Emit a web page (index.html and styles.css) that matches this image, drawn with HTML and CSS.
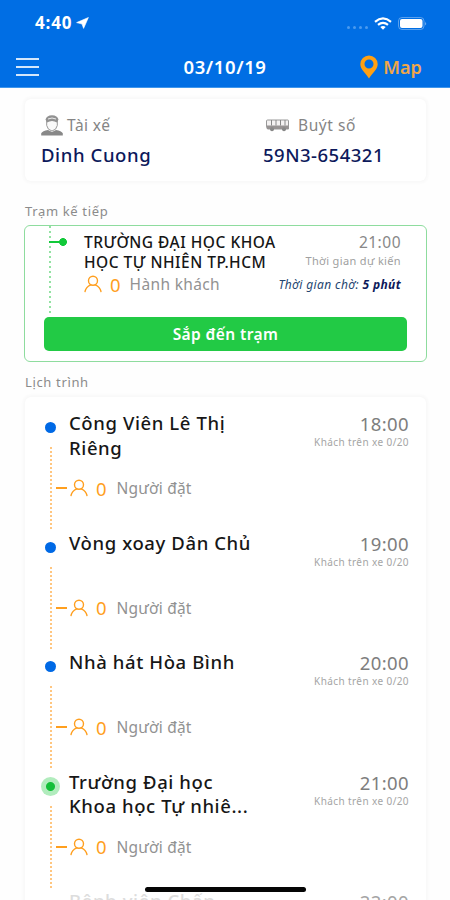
FILE: index.html
```html
<!DOCTYPE html>
<html lang="vi">
<head>
<meta charset="utf-8">
<title>Lịch trình</title>
<link rel="stylesheet" href="styles.css">
</head>
<body>
<svg class="defs" width="0" height="0">
  <symbol id="person" viewBox="0 0 18 18"><g fill="none" stroke="#ff9f1f" stroke-width="1.4" stroke-linecap="round"><circle cx="9" cy="5.7" r="4.5"/><path d="M1 16.5C1.6 13.3 3.7 11.1 6.8 9.8M17 16.5C16.4 13.3 14.3 11.1 11.2 9.8"/></g></symbol>
</svg>
<div class="screen">
  <header class="header">
    <div class="status">
      <span class="clock">4:40</span>
      <svg class="nav-arrow" width="13" height="12" viewBox="0 0 13 12"><path fill="#fff" stroke="#fff" stroke-width=".6" stroke-linejoin="round" d="M12.400.5 7.600 11.400 6 7 .6 5.600z"/></svg>
      <span class="signal"><i></i><i></i><i></i><i></i></span>
      <svg class="wifi" width="18" height="13" viewBox="0 0 18 13"><g fill="none" stroke="#fff" stroke-width="2.2"><path d="M1 4.8Q9-2 17 4.8"/><path d="M4 7.9Q9 3.8 14 7.9"/></g><path fill="#fff" d="M6.3 10Q9 7.8 11.7 10L9 12.8z"/></svg>
      <svg class="battery" width="29" height="13" viewBox="0 0 29 13"><rect x=".5" y=".5" width="25.500" height="12" rx="3.500" fill="none" stroke="#fff" stroke-opacity=".35"/><rect x="2" y="2" width="22.500" height="9" rx="2" fill="#fff"/><path d="M27.300 4.500q1.500 2 0 4z" fill="#fff" opacity=".6"/></svg>
    </div>
    <div class="bar">
      <span class="menu"><i></i><i></i><i></i></span>
      <h1 class="date">03/10/19</h1>
      <div class="map">
        <svg width="18" height="24" viewBox="0 0 18 24"><path fill="#ffa012" fill-rule="evenodd" d="M9 .5A8.700 8.700 0 0 0 .3 9.200C.3 14.500 6.800 19.300 9 23.500 11.200 19.300 17.700 14.500 17.700 9.200A8.700 8.700 0 0 0 9 .5zM9 4.500a4.500 4.500 0 1 1 0 9 4.500 4.500 0 0 1 0-9z"/></svg>
        <span>Map</span>
      </div>
    </div>
  </header>

  <section class="card info">
    <div class="driver">
      <div class="info-label">
        <svg width="22" height="21" viewBox="0 0 22 21"><path fill="#888" d="M.2 20.500v-2.200q1.300-2.200 6.800-3.200l4 2 4-2q5.500 1 6.800 3.200v2.200z"/><path fill="#fafafa" stroke="#999" d="M5.700 5v5.500Q6.500 15 11 16q4.500-1 5.300-5.500V5z"/><path fill="#929292" d="M4.500 4.500Q5.500.5 11 .3q5.500.2 6.500 4.200l-1.500 3Q11 4.500 6 7.500z"/><path fill="none" stroke="#eee" d="M7 4q4-2 8 0"/></svg>
        <span>Tài xế</span>
      </div>
      <div class="info-value name">Dinh Cuong</div>
    </div>
    <div class="bus">
      <div class="info-label">
        <svg width="24" height="13" viewBox="0 0 24 13"><path d="M1.500 1h20.300q.7 0 .7.700V10H1.500Q.5 9 .5 7V2q0-1 1-1z" fill="#f4f2f2" stroke="#999"/><path d="M1 6.500h21.500V10H1z" fill="#979393"/><path d="M5.500 1v5.500M10 1v5.500M14.500 1v5.500M19 1v5.500" stroke="#888"/><circle cx="6" cy="10.300" r="2" fill="#888"/><circle cx="18" cy="10.300" r="2" fill="#888"/></svg>
        <span>Buýt số</span>
      </div>
      <div class="info-value plate">59N3-654321</div>
    </div>
  </section>

  <h2 class="caption next-caption">Trạm kế tiếp</h2>
  <section class="next">
    <div class="next-body">
      <div class="next-rail"><i></i></div>
      <div class="next-main">
        <div class="next-title">TRƯỜNG ĐẠI HỌC KHOA<br>HỌC TỰ NHIÊN TP.HCM</div>
        <div class="people"><svg width="18" height="18"><use href="#person"/></svg><b>0</b><span class="passengers">Hành khách</span></div>
      </div>
      <div class="next-side">
        <div class="next-time">21:00</div>
        <div class="expected">Thời gian dự kiến</div>
        <div class="wait">Thời gian chờ: <b>5 phút</b></div>
      </div>
    </div>
    <button class="arrive">Sắp đến trạm</button>
  </section>

  <h2 class="caption list-caption">Lịch trình</h2>
  <section class="card list">
    <article class="stop">
      <div class="rail"><i class="dot"></i><i class="line"></i></div>
      <div class="stop-main"><h3>Công Viên Lê Thị<br>Riêng</h3><div class="people booked"><svg width="18" height="18"><use href="#person"/></svg><b>0</b><span>Người đặt</span></div></div>
      <div class="stop-side"><div class="time">18:00</div><div class="load">Khách trên xe 0/20</div></div>
    </article>
    <article class="stop">
      <div class="rail"><i class="dot"></i><i class="line"></i></div>
      <div class="stop-main"><h3>Vòng xoay Dân Chủ</h3><div class="people booked"><svg width="18" height="18"><use href="#person"/></svg><b>0</b><span>Người đặt</span></div></div>
      <div class="stop-side"><div class="time">19:00</div><div class="load">Khách trên xe 0/20</div></div>
    </article>
    <article class="stop">
      <div class="rail"><i class="dot"></i><i class="line"></i></div>
      <div class="stop-main"><h3>Nhà hát Hòa Bình</h3><div class="people booked"><svg width="18" height="18"><use href="#person"/></svg><b>0</b><span>Người đặt</span></div></div>
      <div class="stop-side"><div class="time">20:00</div><div class="load">Khách trên xe 0/20</div></div>
    </article>
    <article class="stop">
      <div class="rail"><i class="dot current"></i><i class="line"></i></div>
      <div class="stop-main"><h3>Trường Đại học<br>Khoa học Tự nhiê...</h3><div class="people booked"><svg width="18" height="18"><use href="#person"/></svg><b>0</b><span>Người đặt</span></div></div>
      <div class="stop-side"><div class="time">21:00</div><div class="load">Khách trên xe 0/20</div></div>
    </article>
    <article class="stop upcoming">
      <div class="rail"></div>
      <div class="stop-main"><h3>Bệnh viện Chấn</h3></div>
      <div class="stop-side"><div class="time">22:00</div></div>
    </article>
  </section>
  <div class="home-indicator"></div>
</div>
</body>
</html>
```

FILE: styles.css
```css
* { box-sizing: border-box; }
body { margin: 0; font-family: "Noto Sans", "Open Sans", sans-serif; background: #fff; color: #111; }
h1, h2, h3 { margin: 0; font-weight: 500; }
i { font-style: normal; display: block; }
svg { display: block; flex: none; }
.defs { position: absolute; }
.screen { position: relative; width: 450px; height: 900px; overflow: hidden; background: #fefefe; }

.header { height: 88px; background: #006ee4; color: #fff; border-bottom: 1px solid #3f96ec; }
.status { height: 46px; display: flex; align-items: center; padding: 0 23px 0 35px; }
.clock { font-size: 17px; line-height: 22px; font-weight: 700; letter-spacing: .800px; font-family: "Open Sans", sans-serif; }
.nav-arrow { margin-left: 4px; }
.signal { display: flex; gap: 3px; margin: 8px 6px 0 auto; }
.signal i { width: 3px; height: 3px; border-radius: 50%; background: #4a9aef; }
.battery { margin-left: 6px; }
.bar { height: 41px; display: grid; grid-template-columns: 1fr auto 1fr; align-items: center; padding: 0 28px 0 16px; }
.menu { display: flex; flex-direction: column; gap: 6px; width: 23px; }
.menu i { height: 2px; background: #d4e7fb; }
.date { font-size: 18.500px; line-height: 24px; font-weight: 600; letter-spacing: .600px; padding-left: 12px; }
.map { display: flex; gap: 5px; justify-content: flex-end; align-items: center; color: #f0a648; font-size: 18px; font-weight: 600; letter-spacing: .1px; }

.card { background: #fff; border-radius: 6px; box-shadow: 0 0 3px 2px #f8f8f8; }
.info { margin: 11px 24px 0 25px; height: 82px; display: flex; padding: 12px 16px; }
.driver { width: 222px; }
.info-label { height: 28px; display: flex; align-items: center; gap: 4px; font-size: 15.500px; letter-spacing: .4px; color: #858585; }
.bus .info-label { padding-left: 3px; gap: 8px; letter-spacing: .55px; }
.info-value { height: 30px; line-height: 32px; font-size: 18.500px; font-weight: 500; letter-spacing: .6px; color: #0d195b; }
.plate { letter-spacing: .5px; }

.caption { color: #8b8b8b; font-size: 13px; font-weight: 400; line-height: 20px; padding-left: 25px; letter-spacing: .65px; }
.next-caption { margin-top: 20px; }
.next { margin: 4px 23px 0 24px; height: 137px; border: 1.500px solid #8edc9e; border-radius: 6px; padding: 0 19px; background: #fff; }
.next-body { height: 91px; display: flex; padding-right: 6px; }
.next-rail { width: 40px; margin-left: 5px; height: 90px; flex: none; background: repeating-linear-gradient(to bottom, #92e2a2 0 2px, transparent 2px 5px) 0 0 / 2px 100% no-repeat; }
.next-rail i { width: 19px; height: 8px; margin-top: 12px; background: radial-gradient(circle at 14px 4px, #12c93a 3.600px, transparent 4.200px), linear-gradient(#12c93a, #12c93a) 0 3px / 14px 2px no-repeat; }
.next-main { width: 190px; flex: none; margin-left: -5px; padding-top: 6px; white-space: nowrap; }
.next-title { font-size: 15.500px; font-weight: 500; line-height: 20px; letter-spacing: .5px; color: #161616; }
.people { display: flex; align-items: center; white-space: nowrap; height: 24px; font-size: 15.500px; letter-spacing: .35px; color: #929292; }
.people b { font-size: 18.500px; font-weight: 400; letter-spacing: 0; color: #ff9f1f; margin: 0 9px 0 8px; }
.next-side { margin-left: auto; text-align: right; white-space: nowrap; padding-top: 6px; }
.next-time { font-size: 15.500px; line-height: 20px; letter-spacing: .5px; color: #888; }
.expected { font-size: 11px; line-height: 17px; letter-spacing: .35px; color: #a0a0a0; }
.wait { font-size: 12px; line-height: 20px; letter-spacing: .38px; margin-top: 6px; font-style: italic; color: #24456f; }
.wait b { font-weight: 700; color: #0d195b; }
.arrive { display: block; width: 100%; height: 34px; border: 0; border-radius: 5px; background: #22ca45; color: #fff; font: 600 15.500px "Noto Sans", sans-serif; letter-spacing: .4px; padding: 0; }

.list-caption { margin-top: 10px; }
.list { margin: 5px 24px 0 25px; height: 600px; padding: 14px 17px 0 15px; }
.stop { height: 119.500px; display: flex; }
.rail { width: 29px; display: flex; flex-direction: column; flex: none; }
.dot { width: 11px; height: 11px; margin: 11px 0 0 5px; border-radius: 50%; background: #0069e5; }
.dot.current { width: 19px; height: 19px; margin: 7px 0 -4px 1px; background: radial-gradient(circle, #12bf38 4px, #b1ecbd 5px); }
.line { width: 2px; height: 83px; margin: 14px 0 0 10px; background: repeating-linear-gradient(to bottom, #ffc680 0 2px, transparent 2px 4px); }
.stop-main { flex: 1; white-space: nowrap; }
.stop h3 { height: 50px; font-size: 18.500px; line-height: 24.800px; letter-spacing: .6px; color: #171717; }
.booked { margin-top: 15px; margin-left: 1px; letter-spacing: .2px; }
.booked b { margin-right: 10px; }
.booked::before { content: ""; width: 11px; height: 2px; background: #ff9f1f; margin-left: -14px; margin-right: 3px; }
.stop-side { text-align: right; white-space: nowrap; }
.time { font-size: 18.500px; line-height: 25px; letter-spacing: .4px; color: #7e7e7e; }
.load { font-size: 10px; line-height: 13px; letter-spacing: .4px; color: #a5a5a5; }
.upcoming h3 { color: #ddd; }
.upcoming .time { color: #a5a5a5; }
.home-indicator { position: absolute; left: 145px; top: 887px; width: 161px; height: 5px; border-radius: 3px; background: #050505; }
```
